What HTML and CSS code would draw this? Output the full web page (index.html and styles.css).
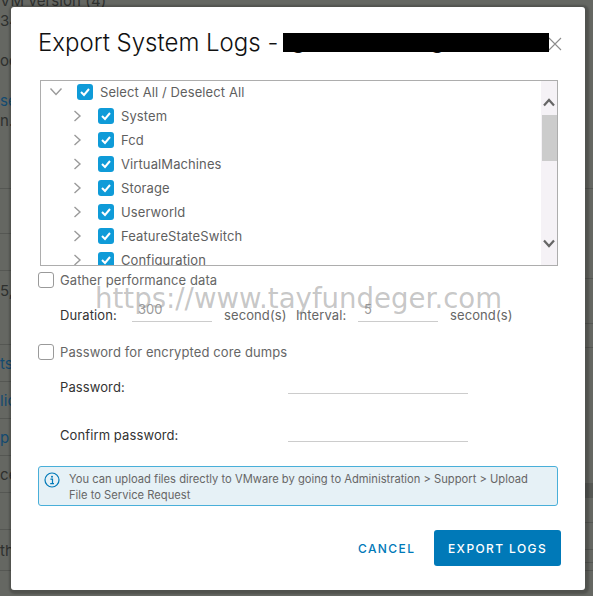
FILE: index.html
```html
<!DOCTYPE html>
<html lang="en">
<head>
    <meta charset="UTF-8">
    <title>Export System Logs</title>
    <link rel="stylesheet" href="styles.css">
</head>
<body>

    <!-- page behind the dialog -->
    <div class="backdrop">
        <div class="bg-left">
            <div class="bg-top">
                <div>VM version (4)</div>
                <div>34</div>
                <div>&nbsp;</div>
                <div>oc</div>
                <div>&nbsp;</div>
                <div class="bg-link">se</div>
                <div>n.l</div>
            </div>
            <div class="bg-row bg-first"></div>
            <div class="bg-row"></div>
            <div class="bg-row bg-tall">5,7</div>
            <div class="bg-row bg-link">ts</div>
            <div class="bg-row bg-link">lic</div>
            <div class="bg-row bg-link">p</div>
            <div class="bg-row">ce</div>
            <div class="bg-row"></div>
            <div class="bg-row bg-wide">th</div>
            <div class="bg-row"></div>
        </div>
        <div class="bg-right">
            <div class="bg-line l1"></div>
            <div class="bg-line l2"></div>
            <div class="bg-line l3"></div>
            <div class="bg-line l4"></div>
            <div class="bg-band"></div>
            <div class="bg-line l6"></div>
            <div class="bg-line l7"></div>
            <div class="bg-line l8"></div>
            <div class="bg-line l9"></div>
        </div>
    </div>

    <div class="dialog">
        <div class="dialog-header">
            <h1>Export System Logs -</h1>
            <div class="redacted">
                <span class="tail tail-a">g</span>
                <span class="tail tail-b">g</span>
            </div>
            <button class="close" aria-label="Close">
                <svg width="14" height="14" viewBox="0 0 14 14"><path d="M1 1 L13 13 M13 1 L1 13" fill="none" stroke="#8c8c8c" stroke-width="1.1"/></svg>
            </button>
        </div>

        <div class="tree">
            <div class="tree-list">
                <div class="tree-row tree-root">
                    <svg class="chev-down" width="14" height="10" viewBox="0 0 14 10"><path d="M1.5 1.5 L7 7.5 L12.5 1.5" fill="none" stroke="#9a9a9a" stroke-width="1.4"/></svg>
                    <span class="check"><svg width="16" height="16" viewBox="0 0 16 16"><path d="M4 8 L7 11 L12 5" fill="none" stroke="#fff" stroke-width="2"/></svg></span>
                    <span>Select All / Deselect All</span>
                </div>
                <div class="tree-row">
                    <svg class="chev-right" width="9" height="12" viewBox="0 0 9 12"><path d="M1.5 1 L7 6 L1.5 11" fill="none" stroke="#9a9a9a" stroke-width="1.4"/></svg>
                    <span class="check"><svg width="16" height="16" viewBox="0 0 16 16"><path d="M4 8 L7 11 L12 5" fill="none" stroke="#fff" stroke-width="2"/></svg></span>
                    <span>System</span>
                </div>
                <div class="tree-row">
                    <svg class="chev-right" width="9" height="12" viewBox="0 0 9 12"><path d="M1.5 1 L7 6 L1.5 11" fill="none" stroke="#9a9a9a" stroke-width="1.4"/></svg>
                    <span class="check"><svg width="16" height="16" viewBox="0 0 16 16"><path d="M4 8 L7 11 L12 5" fill="none" stroke="#fff" stroke-width="2"/></svg></span>
                    <span>Fcd</span>
                </div>
                <div class="tree-row">
                    <svg class="chev-right" width="9" height="12" viewBox="0 0 9 12"><path d="M1.5 1 L7 6 L1.5 11" fill="none" stroke="#9a9a9a" stroke-width="1.4"/></svg>
                    <span class="check"><svg width="16" height="16" viewBox="0 0 16 16"><path d="M4 8 L7 11 L12 5" fill="none" stroke="#fff" stroke-width="2"/></svg></span>
                    <span>VirtualMachines</span>
                </div>
                <div class="tree-row">
                    <svg class="chev-right" width="9" height="12" viewBox="0 0 9 12"><path d="M1.5 1 L7 6 L1.5 11" fill="none" stroke="#9a9a9a" stroke-width="1.4"/></svg>
                    <span class="check"><svg width="16" height="16" viewBox="0 0 16 16"><path d="M4 8 L7 11 L12 5" fill="none" stroke="#fff" stroke-width="2"/></svg></span>
                    <span>Storage</span>
                </div>
                <div class="tree-row">
                    <svg class="chev-right" width="9" height="12" viewBox="0 0 9 12"><path d="M1.5 1 L7 6 L1.5 11" fill="none" stroke="#9a9a9a" stroke-width="1.4"/></svg>
                    <span class="check"><svg width="16" height="16" viewBox="0 0 16 16"><path d="M4 8 L7 11 L12 5" fill="none" stroke="#fff" stroke-width="2"/></svg></span>
                    <span>Userworld</span>
                </div>
                <div class="tree-row">
                    <svg class="chev-right" width="9" height="12" viewBox="0 0 9 12"><path d="M1.5 1 L7 6 L1.5 11" fill="none" stroke="#9a9a9a" stroke-width="1.4"/></svg>
                    <span class="check"><svg width="16" height="16" viewBox="0 0 16 16"><path d="M4 8 L7 11 L12 5" fill="none" stroke="#fff" stroke-width="2"/></svg></span>
                    <span>FeatureStateSwitch</span>
                </div>
                <div class="tree-row">
                    <svg class="chev-right" width="9" height="12" viewBox="0 0 9 12"><path d="M1.5 1 L7 6 L1.5 11" fill="none" stroke="#9a9a9a" stroke-width="1.4"/></svg>
                    <span class="check"><svg width="16" height="16" viewBox="0 0 16 16"><path d="M4 8 L7 11 L12 5" fill="none" stroke="#fff" stroke-width="2"/></svg></span>
                    <span>Configuration</span>
                </div>
            </div>
            <div class="scrollbar">
                <svg class="arrow-up" width="12" height="9" viewBox="0 0 12 9"><path d="M1 7.5 L6 2 L11 7.5" fill="none" stroke="#666" stroke-width="2.2"/></svg>
                <div class="thumb"></div>
                <svg class="arrow-down" width="12" height="9" viewBox="0 0 12 9"><path d="M1 1.5 L6 7 L11 1.5" fill="none" stroke="#666" stroke-width="2.2"/></svg>
            </div>
        </div>

        <label class="option option-perf">
            <span class="box"></span>
            <span>Gather performance data</span>
        </label>
        <div class="field-row row-duration">
            <span class="field-label label-duration">Duration:</span>
            <input class="field-input input-short" type="text" value="300" disabled>
            <span class="unit">second(s)</span>
            <span class="field-label label-interval">Interval:</span>
            <input class="field-input input-short" type="text" value="5" disabled>
            <span class="unit">second(s)</span>
        </div>

        <label class="option option-pass">
            <span class="box"></span>
            <span>Password for encrypted core dumps</span>
        </label>
        <div class="field-row row-password">
            <span class="field-label label-password">Password:</span>
            <input class="field-input input-long" type="password">
        </div>
        <div class="field-row row-confirm">
            <span class="field-label label-password">Confirm password:</span>
            <input class="field-input input-long" type="password">
        </div>

        <div class="info">
            <svg class="info-icon" width="16" height="16" viewBox="0 0 16 16">
                <circle cx="8" cy="8" r="7" fill="none" stroke="#0079b8" stroke-width="1.2"/>
                <circle cx="8" cy="4.8" r="1" fill="#0079b8"/>
                <path d="M6.4 7.2 H8.5 V11.4 M6.2 11.6 H10" fill="none" stroke="#0079b8" stroke-width="1.2"/>
            </svg>
            <p>You can upload files directly to VMware by going to Administration &gt; Support &gt; Upload File to Service Request</p>
        </div>

        <div class="actions">
            <button class="btn-link">CANCEL</button>
            <button class="btn-primary">EXPORT LOGS</button>
        </div>
    </div>

    <div class="watermark">https://www.tayfundeger.com</div>

</body>
</html>
```

FILE: styles.css
```css
* {
    box-sizing: border-box;
}

html, body {
    margin: 0;
    padding: 0;
    height: 100%;
    overflow: hidden;
}

body {
    position: relative;
    font-family: Inter, "Open Sans", sans-serif;
    font-size: 13px;
    letter-spacing: 0.1px;
    background-color: #656762;
    color: #5f5f5f;
}

/* background page */
.backdrop {
    display: flex;
    justify-content: space-between;
    height: 596px;
    overflow: hidden;
}

.bg-left {
    width: 40px;
    font-size: 15px;
    color: #2e302e;
}

.bg-top {
    display: flex;
    flex-direction: column;
    height: 188px;
    line-height: 20px;
    white-space: nowrap;
}

.bg-top > div:first-child {
    margin-top: -9px;
}

.bg-row {
    display: flex;
    align-items: center;
    height: 37px;
    border-top: 1px solid #555753;
    padding-top: 1px;
}

.bg-first {
    height: 45px;
}

.bg-tall {
    height: 74px;
    align-items: flex-start;
    padding-top: 10px;
}

.bg-wide {
    height: 41px;
}

.bg-link {
    color: #134a70;
}

.bg-right {
    width: 8px;
}

.bg-line {
    height: 1px;
    background-color: #555753;
}

.l1 { margin-top: 188px; }
.l2 { margin-top: 89px; }
.l3 { margin-top: 44px; }
.l4 { margin-top: 23px; }
.bg-band { margin-top: 135px; height: 15px; background-color: #565854; }
.l6 { margin-top: 24px; }
.l7 { margin-top: 26px; }
.l8 { margin-top: 12px; }
.l9 { margin-top: 7px; }

/* dialog */
.dialog {
    position: absolute;
    left: 11px;
    top: 7px;
    width: 574px;
    height: 583px;
    padding-left: 27px;
    background-color: #fff;
    border-radius: 3px;
    box-shadow: 1px 1px 2px 3px rgba(0, 0, 0, 0.2);
}

.dialog-header {
    display: flex;
    align-items: flex-start;
    height: 73px;
    padding-top: 26px;
}

h1 {
    margin: -6px 0 0 0;
    width: 245px;
    font-size: 24px;
    font-weight: 300;
    letter-spacing: 0;
    line-height: 32px;
    color: #111;
    white-space: nowrap;
}

.redacted {
    position: relative;
    width: 266px;
    height: 19px;
}

.redacted::after {
    content: "";
    position: absolute;
    inset: 0;
    background-color: #000;
}

.tail {
    position: absolute;
    top: -9px;
    font-size: 24px;
    font-weight: 300;
    line-height: 32px;
    color: #111;
}

.tail-a { left: 8px; }
.tail-b { left: 147px; }

.close {
    display: flex;
    margin: 4px 0 0 -1px;
    padding: 0;
    border: none;
    background: none;
}

.tree {
    display: flex;
    justify-content: space-between;
    width: 518px;
    height: 186px;
    margin-left: 2px;
    border: 1px solid #adadad;
    overflow: hidden;
}

.tree-list {
    flex: 1;
    margin-top: -1px;
}

.tree-row {
    display: flex;
    align-items: center;
    height: 24px;
    padding-left: 32px;
}

.tree-root {
    padding-left: 8px;
}

.chev-right {
    margin-right: 16px;
}

.chev-down {
    margin-right: 14px;
}

.check {
    display: flex;
    width: 16px;
    height: 16px;
    margin-right: 7px;
    background-color: #0f9bd8;
    border-radius: 3px;
}

.scrollbar {
    display: flex;
    flex-direction: column;
    width: 16px;
    background-color: #f5f2f6;
}

.arrow-up {
    margin: 17px 0 8px 2px;
}

.thumb {
    width: 15px;
    height: 46px;
    margin-left: 1px;
    background-color: #ccc;
}

.arrow-down {
    margin: 78px 0 0 2px;
}

.option {
    display: flex;
    align-items: center;
    gap: 6px;
    height: 16px;
    color: #666;
}

.option-perf {
    margin-top: 6px;
}

.option-pass {
    margin-top: 22px;
}

.box {
    width: 16px;
    height: 16px;
    background-color: #fff;
    border: 1px solid #9a9a9a;
    border-radius: 3px;
}

.field-row {
    display: flex;
    align-items: flex-end;
    padding-left: 22px;
}

.row-duration {
    height: 19px;
    margin-top: 15px;
}

.row-password {
    height: 34px;
}

.row-confirm {
    height: 48px;
}

.field-label,
.unit {
    line-height: 14px;
    color: #333;
    white-space: nowrap;
}

.unit {
    width: 60px;
    margin-left: 12px;
    color: #666;
}

.label-duration {
    width: 72px;
}

.label-interval {
    width: 62px;
    margin-left: 12px;
    color: #666;
}

.label-password {
    width: 228px;
}

.field-input {
    height: 19px;
    padding: 0 0 6px 6px;
    border: none;
    border-bottom: 1px solid #ccc;
    background: none;
    font-family: inherit;
    font-size: 13px;
    color: #9a9a9a;
    outline: none;
}

.input-short {
    width: 80px;
}

.input-long {
    width: 180px;
}

.info {
    display: flex;
    width: 520px;
    height: 40px;
    margin-top: 24px;
    padding: 4px 20px 0 5px;
    background-color: #e6f1f6;
    border: 1px solid #49afd9;
    border-radius: 3px;
}

.info-icon {
    flex: none;
    margin: 1px 9px 0 0;
}

.info p {
    margin: 0;
    font-size: 11.2px;
    letter-spacing: 0;
    line-height: 16px;
    color: #666;
}

.actions {
    display: flex;
    align-items: center;
    height: 36px;
    margin-top: 24px;
    padding-left: 320px;
}

.actions button {
    font-family: inherit;
    font-size: 12px;
    font-weight: 500;
    letter-spacing: 1.4px;
    border: none;
    border-radius: 3px;
}

.btn-link {
    width: 57px;
    padding: 0;
    margin-right: 19px;
    background: none;
    color: #0079b8;
}

.btn-primary {
    width: 127px;
    height: 36px;
    background-color: #0079b8;
    color: #fff;
}

.watermark {
    position: absolute;
    left: 95px;
    top: 281px;
    font-family: "DejaVu Sans", sans-serif;
    font-size: 27.6px;
    letter-spacing: 0;
    line-height: 36px;
    color: rgba(130, 130, 130, 0.45);
    white-space: nowrap;
    pointer-events: none;
}
```
